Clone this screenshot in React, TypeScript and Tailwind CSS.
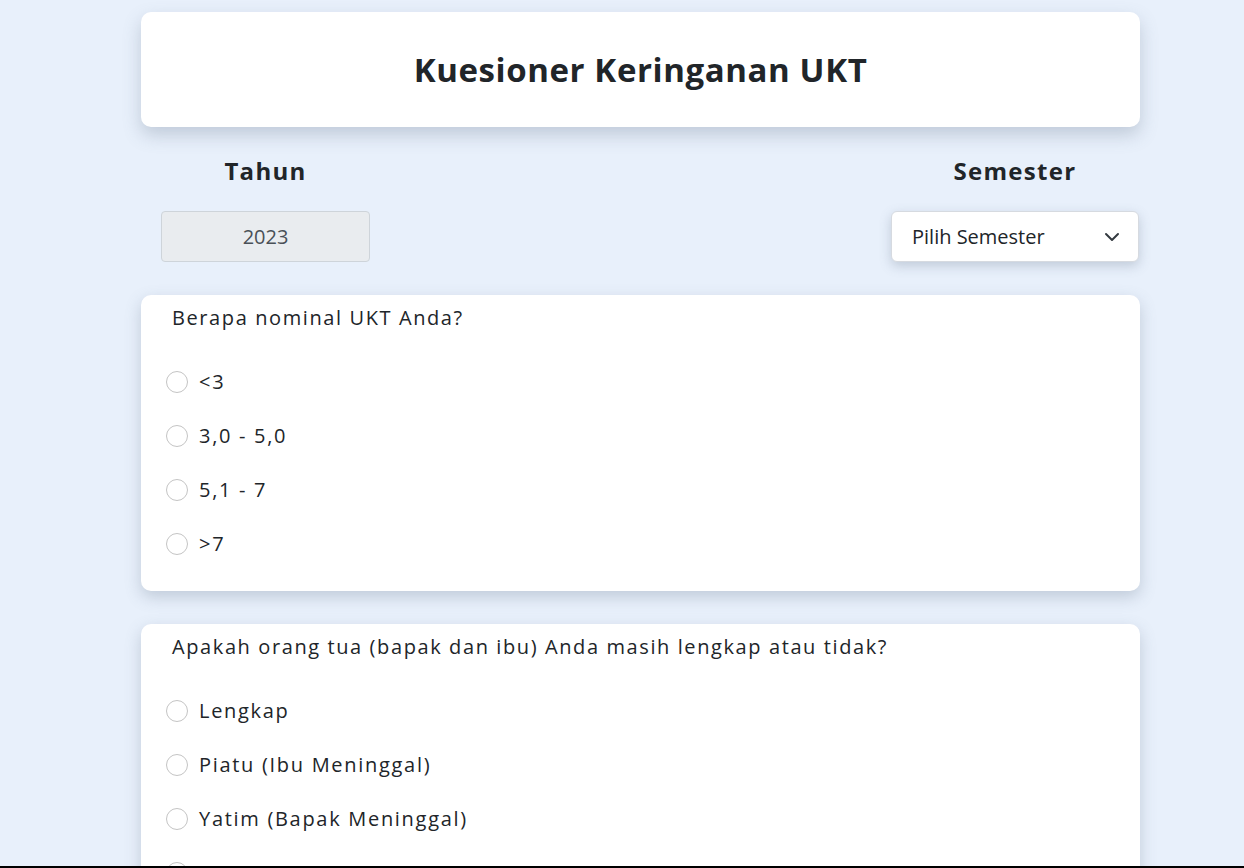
import React from "react";

const questions = [
  {
    q: "Berapa nominal UKT Anda?",
    options: ["<3", "3,0 - 5,0", "5,1 - 7", ">7"],
  },
  {
    q: "Apakah orang tua (bapak dan ibu) Anda masih lengkap atau tidak?",
    options: ["Lengkap", "Piatu (Ibu Meninggal)", "Yatim (Bapak Meninggal)", "Yatim Piatu"],
  },
];

const QuestionCard = ({ q, options }: { q: string; options: string[] }) => {
  return (
    <div className="bg-white rounded-[10px] shadow-[0_6px_16px_rgba(100,116,139,0.3)] pt-[8px] pb-[20px]">
      <p className="pl-[31px] text-[20px] leading-[30px] tracking-[1.6px] text-[#212529]">{q}</p>
      <div className="mt-[22px] flex flex-col">
        {options.map((o) => (
          <label key={o} className="flex items-center h-[54px] pl-[25px]">
            <span className="w-[22px] h-[22px] rounded-full border border-[#c4c4c4] bg-white"></span>
            <span className="ml-[11px] text-[20px] tracking-[1.7px] text-[#212529]">{o}</span>
          </label>
        ))}
      </div>
    </div>
  );
};

export default function App() {
  return (
    <div
      className="min-h-screen bg-[#e8f0fb] pt-[12px] pb-10"
      style={{ fontFamily: '"Open Sans", "Noto Sans", sans-serif' }}
    >
      <div className="w-[999px] ml-[141px] flex flex-col">
        {/* Header */}
        <div className="bg-white rounded-[10px] h-[115px] flex items-center justify-center shadow-[0_8px_18px_rgba(100,116,139,0.3)]">
          <h1 className="text-[33px] font-bold text-[#212529] tracking-[0.6px]">Kuesioner Keringanan UKT</h1>
        </div>

        {/* Tahun / Semester */}
        <div className="flex justify-between mt-[26px]">
          <div className="flex flex-col items-center w-[209px] ml-[20px]">
            <h2 className="text-[24px] font-bold text-[#212529] leading-[36px] tracking-[1.3px]">Tahun</h2>
            <div className="mt-[22px] w-[209px] h-[51px] bg-[#e9ecef] border border-[#ced4da] rounded-[4px] flex items-center justify-center text-[20px] text-[#495057]">
              2023
            </div>
          </div>
          <div className="flex flex-col items-center w-[248px] mr-[1px]">
            <h2 className="text-[24px] font-bold text-[#212529] leading-[36px] tracking-[1.3px]">Semester</h2>
            <div className="mt-[22px] w-[248px] h-[51px] bg-white border border-[#d6dae0] rounded-[6px] flex items-center justify-between pl-[20px] pr-[18px] text-[20px] text-[#212529] shadow-[0_4px_12px_rgba(100,116,139,0.3)]">
              <span>Pilih Semester</span>
              <svg width="16" height="16" viewBox="0 0 16 16" fill="none" stroke="#343a40" strokeWidth="2" strokeLinecap="round" strokeLinejoin="round">
                <path d="M2 5l6 6 6-6" />
              </svg>
            </div>
          </div>
        </div>

        <div className="mt-[33px] flex flex-col gap-[33px]">
          {questions.map((x) => (
            <QuestionCard key={x.q} q={x.q} options={x.options} />
          ))}
        </div>
      </div>
      <div className="fixed bottom-0 left-0 right-0 h-[2px] bg-black"></div>
    </div>
  );
}
